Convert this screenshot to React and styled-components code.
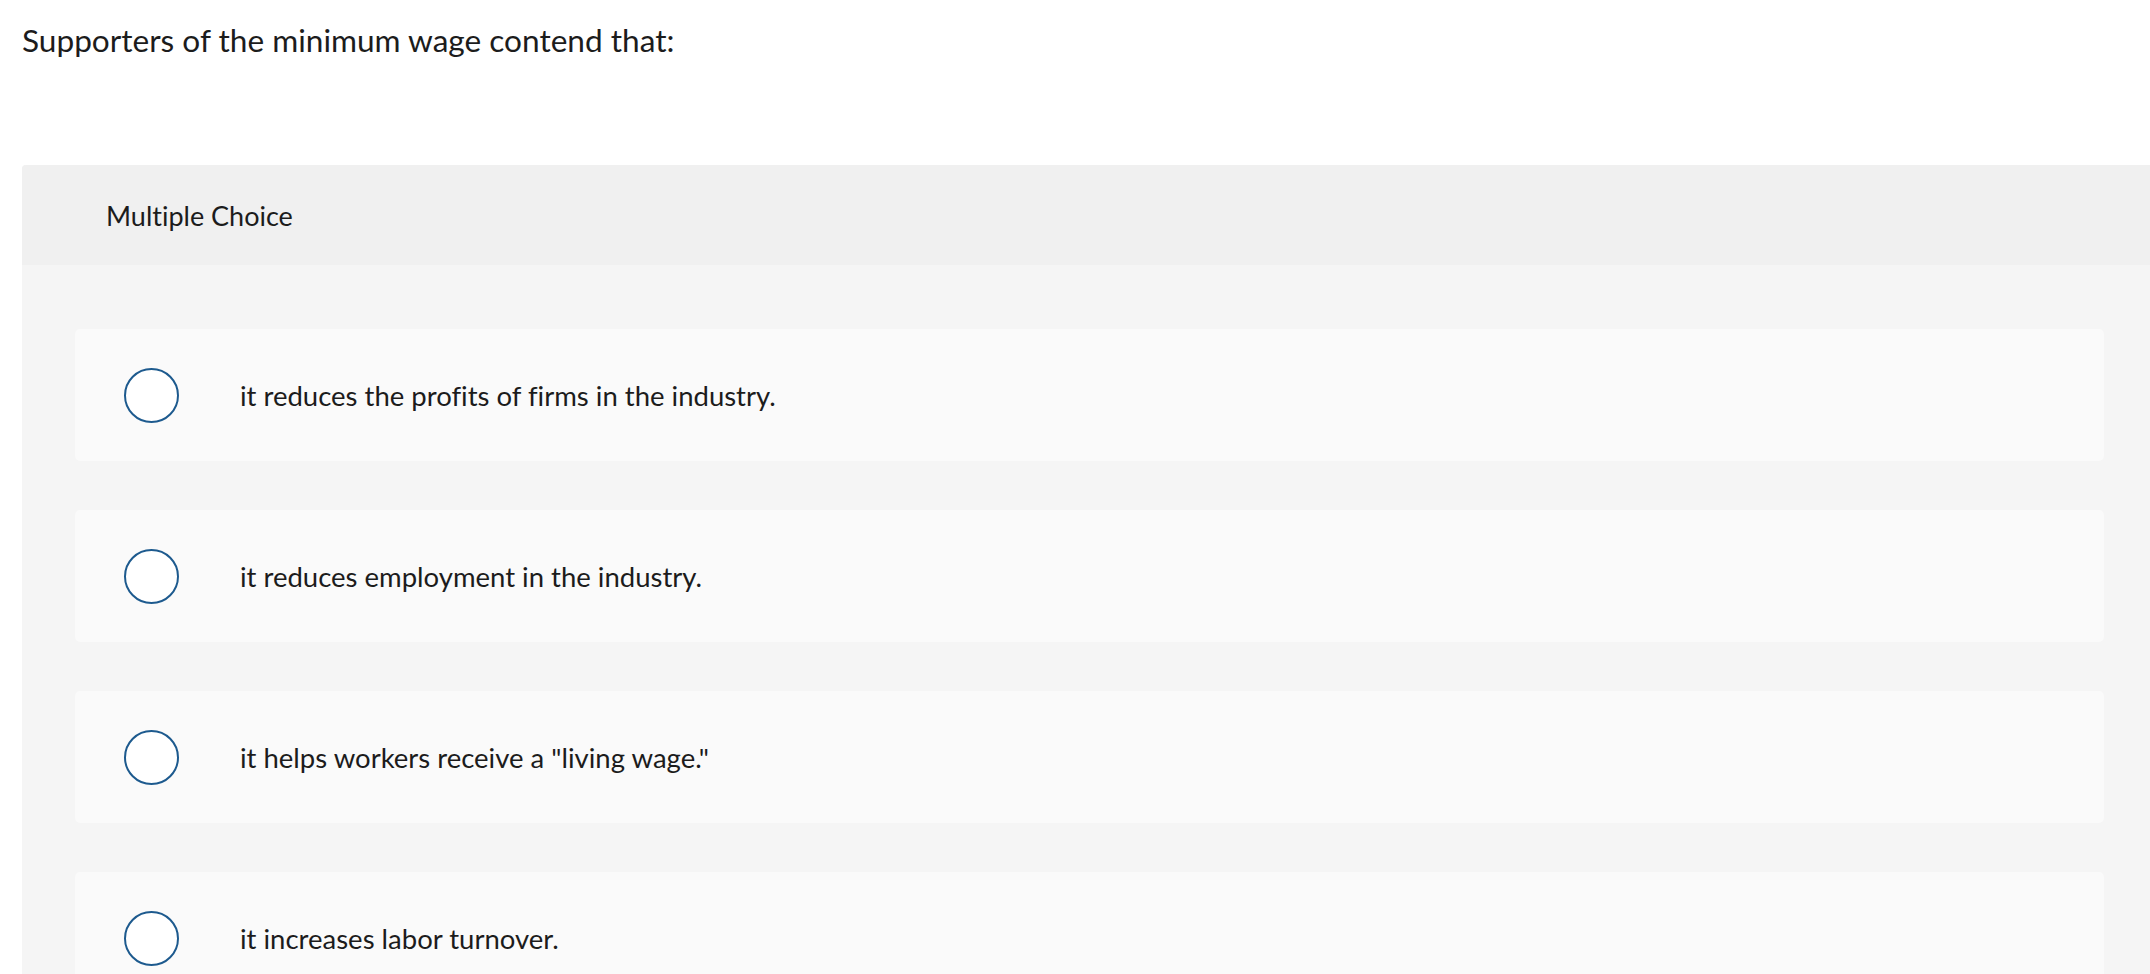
import React from "react";
import styled, { createGlobalStyle } from "styled-components";

const Global = createGlobalStyle`
  html, body { margin: 0; padding: 0; background: #ffffff; }
  body {
    font-family: Lato, "Open Sans", "Liberation Sans", sans-serif;
    color: #1c1c1c;
    font-variant-ligatures: none;
  }
`;

const Page = styled.div`
  padding: 21px 0 0 22px;
  height: 974px;
  box-sizing: border-box;
  overflow: hidden;
  display: flex;
  flex-direction: column;
`;

const Prompt = styled.p`
  margin: 0;
  font-size: 31.6px;
  line-height: 39px;
  font-weight: 400;
`;

const Panel = styled.section`
  margin-top: 105px;
  background: #f5f5f5;
  border-top-left-radius: 4px;
  flex: 1;
`;

const PanelHeader = styled.header`
  height: 100px;
  background: #f0f0f0;
  border-top-left-radius: 4px;
  display: flex;
  align-items: center;
  padding-left: 84px;
  font-size: 27px;
`;

const Choices = styled.ul`
  list-style: none;
  margin: 0;
  padding: 64px 46px 0 53px;
  display: flex;
  flex-direction: column;
  gap: 49px;
`;

const Choice = styled.li`
  height: 132px;
  background: #fafafa;
  border-radius: 5px;
  display: flex;
  align-items: center;
  padding-left: 49px;
`;

const Radio = styled.span`
  width: 55px;
  height: 55px;
  box-sizing: border-box;
  border: 2px solid #1d5a8e;
  border-radius: 50%;
  background: #ffffff;
  flex: none;
`;

const ChoiceText = styled.span`
  margin-left: 61px;
  font-size: 27.5px;
`;

const options = [
  "it reduces the profits of firms in the industry.",
  "it reduces employment in the industry.",
  'it helps workers receive a "living wage."',
  "it increases labor turnover.",
];

export default function App() {
  return (
    <>
      <Global />
      <Page>
        <Prompt>Supporters of the minimum wage contend that:</Prompt>
        <Panel>
          <PanelHeader>Multiple Choice</PanelHeader>
          <Choices>
            {options.map((o) => (
              <Choice key={o}>
                <Radio />
                <ChoiceText>{o}</ChoiceText>
              </Choice>
            ))}
          </Choices>
        </Panel>
      </Page>
    </>
  );
}
